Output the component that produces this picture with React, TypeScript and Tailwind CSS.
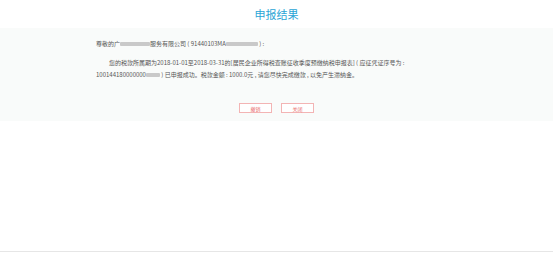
import React from "react";

const Blur = ({ w }: { w: number }) => (
  <span
    className="inline-block h-[4px] align-middle bg-[#c9c9c9] blur-[0.6px] rounded-[1px]"
    style={{ width: w }}
  />
);

export default function App() {
  return (
    <div
      className="w-full h-[253px] flex flex-col bg-white"
      style={{ fontFamily: '"Noto Sans CJK SC", "Liberation Sans", sans-serif' }}
    >
      <div className="h-[28px] flex items-center justify-center">
        <span className="text-[11px] leading-none text-[#2aa5d6]">申报结果</span>
      </div>
      <div className="bg-[#f9fbfa] pl-[96px] pr-[96px] pt-[10px] pb-[8px] text-[6px] leading-[12px] text-[#555]">
        <div className="whitespace-nowrap">
          尊敬的广<Blur w={30} />服务有限公司 ( 91440103MA<Blur w={32} /> ) :
        </div>
        <div className="mt-[7px] whitespace-nowrap pl-[13px]">
          您的税款所属期为2018-01-01至2018-03-31的[居民企业所得税查账征收季度预缴纳税申报表] ( 应征凭证序号为 :
        </div>
        <div className="whitespace-nowrap">
          100144180000000<Blur w={14} /> ) 已申报成功。税款金额 : 1000.0元 , 请您尽快完成缴款 , 以免产生滞纳金。
        </div>
        <div className="mt-[22px] flex justify-center gap-[9px] -ml-[96px] -mr-[96px]">
          <button className="w-[33px] h-[10px] border border-[#f3b4b4] bg-white text-[5px] leading-none text-[#e86a6a] flex items-center justify-center">
            撤销
          </button>
          <button className="w-[33px] h-[10px] border border-[#f3b4b4] bg-white text-[5px] leading-none text-[#e86a6a] flex items-center justify-center">
            关闭
          </button>
        </div>
      </div>
      <div className="flex-1" />
      <div className="h-[1px] bg-[#e6e6e6] mb-[1px]" />
    </div>
  );
}
